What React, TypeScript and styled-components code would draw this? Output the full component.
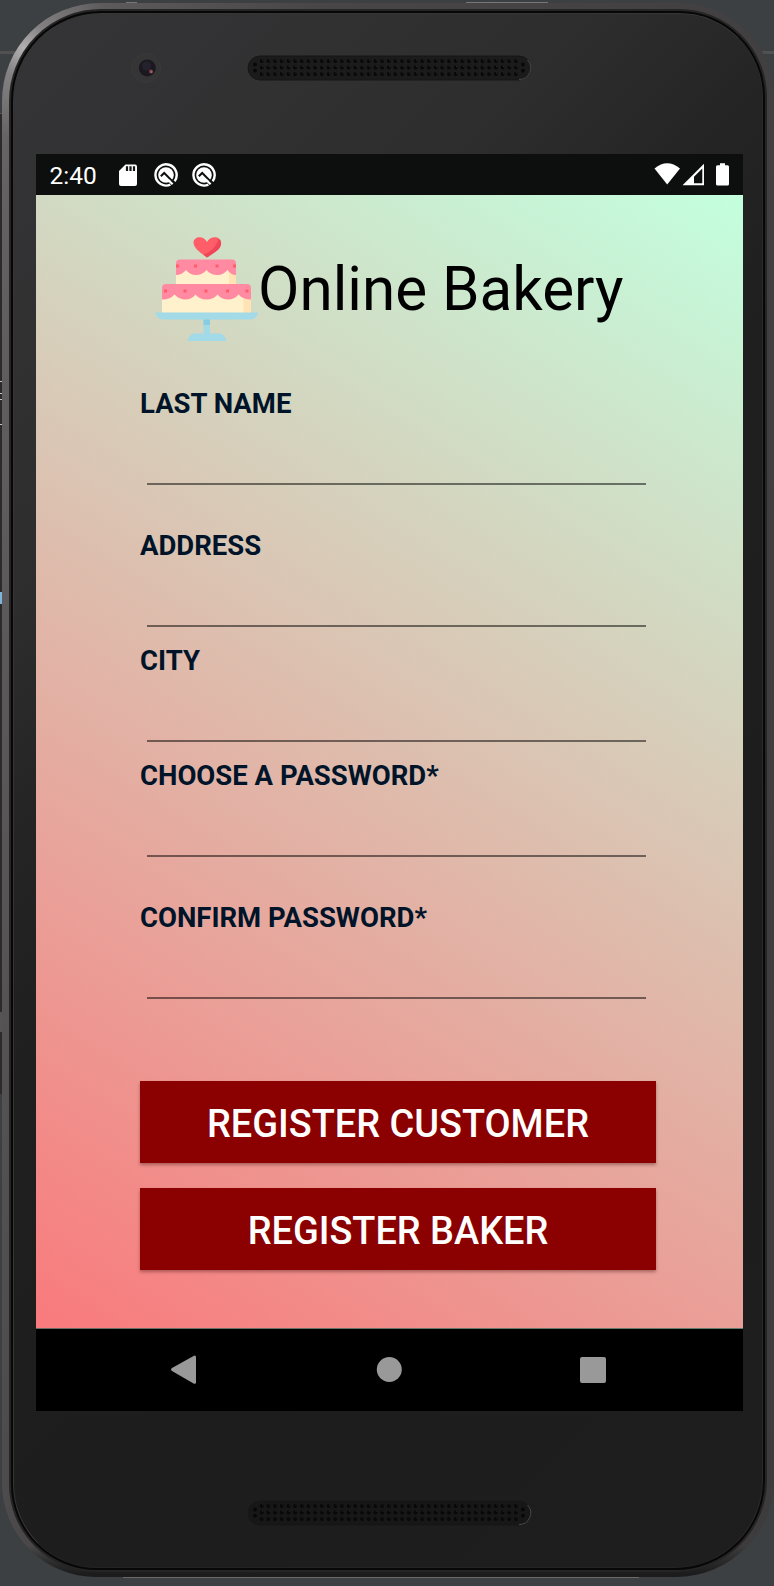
import React from "react";
import styled, { createGlobalStyle } from "styled-components";

const GlobalStyle = createGlobalStyle`
  * { box-sizing: border-box; }
  body { margin: 0; background: #3c3f41; font-family: Roboto, "Liberation Sans", sans-serif; }
  svg { display: block; flex: none; }
`;

const Desktop = styled.div`
  width: 774px;
  height: 1586px;
  overflow: hidden;
  display: flex;
  padding: 3px 0 9px 2px;
  background:
    linear-gradient(#777, #777) 126px 2px / 11px 1px no-repeat,
    linear-gradient(#777, #777) 466px 2px / 82px 1px no-repeat,
    linear-gradient(#6a6a6a, #6a6a6a) 123px 1577px / 516px 1px no-repeat,
    linear-gradient(#515151, #515151) 0 51px / 100% 3px no-repeat,
    linear-gradient(#c4c8cc, #c4c8cc) 0 381px / 2px 1px no-repeat,
    linear-gradient(#c4c8cc, #c4c8cc) 0 393px / 2px 1px no-repeat,
    linear-gradient(#c4c8cc, #c4c8cc) 0 399px / 2px 1px no-repeat,
    linear-gradient(#c4c8cc, #c4c8cc) 0 424px / 2px 1px no-repeat,
    linear-gradient(#7fb5dc, #7fb5dc) 0 592px / 2px 12px no-repeat,
    linear-gradient(#555, #555) 0 1012px / 2px 20px no-repeat,
    linear-gradient(#555, #555) 0 113px / 4px 1px no-repeat,
    linear-gradient(#2b2b2b, #2b2b2b) 0 114px / 4px 980px no-repeat,
    #3c4043;
`;

const Shell = styled.div`
  width: 772px;
  height: 1574px;
  flex: none;
  border-radius: 98px 94px 98px 94px;
  padding: 6px 7px 5px 7px;
  background:
    radial-gradient(circle at 22px 46px, #b3b1b2 0, rgba(150, 148, 149, 0.6) 28px, transparent 90px),
    linear-gradient(180deg, transparent 98%, #1c1c1c 99.8%),
    linear-gradient(100deg, #6b696a 0%, #626061 4%, #484647 30%, #3d3b3c 100%);
`;

const Rim = styled.div`
  height: 100%;
  border-radius: 92px 88px 92px 88px;
  padding: 2px;
  background: #070707;
  border: 2px solid #262526;
`;

const Face = styled.div`
  height: 100%;
  border-radius: 88px 84px 88px 84px;
  border: 1px solid #363637;
  border-right-color: #2a2a2a;
  border-bottom-color: #242424;
  padding: 1px 0 0 22px;
  background: linear-gradient(135deg, #353537 0%, #303031 17%, #2d2d2e 26%, #242424 36%, #1f1f1f 46%, #1d1d1d 70%, #1e1e1e 100%);
  display: flex;
  flex-direction: column;
`;

const Bezel = styled.div<{ $height: number; $top: number }>`
  height: ${(p) => p.$height}px;
  padding-top: ${(p) => p.$top}px;
  display: flex;
  align-items: flex-start;
  flex: none;
`;

const Screen = styled.main`
  width: 707px;
  height: 1257px;
  flex: none;
  display: flex;
  flex-direction: column;
`;

const StatusBar = styled.header`
  height: 41px;
  flex: none;
  background: #0d0f0e;
  color: #fff;
  display: flex;
  align-items: center;
  padding-left: 13.5px;
  font-size: 24.5px;
`;

const Clock = styled.span`
  width: 69.5px;
  padding-top: 2px;
`;

const StatusIcons = styled.div`
  display: flex;
  gap: 14px;
  align-items: center;
`;

const SignalIcons = styled.div`
  margin-left: auto;
  padding: 0 12px 2px 0;
`;

const Content = styled.section`
  height: 1134px;
  flex: none;
  padding: 41px 87px 0 104px;
  background: linear-gradient(32deg, #f97a7c, #c3ffde);
  border-bottom: 1px solid rgba(0, 0, 0, 0.5);
`;

const Heading = styled.div`
  display: flex;
  height: 110px;
  padding-left: 14.5px;
`;

const Title = styled.h1`
  margin: 16px 0 0 -0.5px;
  font-size: 60.2px;
  line-height: 76px;
  font-weight: 400;
  white-space: nowrap;
  color: #000;
`;

const Fields = styled.form`
  padding-top: 41px;
`;

const Field = styled.label<{ $height: number }>`
  display: block;
  height: ${(p) => p.$height}px;
  padding-top: 1px;
  color: #001429;
  font-size: 27.5px;
  line-height: 32px;
  font-weight: 700;
`;

const Underline = styled.span`
  display: block;
  width: 499px;
  height: 2px;
  margin: 63px 0 0 7px;
  background: rgba(0, 0, 0, 0.5);
`;

const Button = styled.button`
  display: block;
  width: 516px;
  height: 82px;
  margin: 0 0 25px;
  padding: 4px 0 0;
  border: 0;
  background: #8b0000;
  color: #fff;
  font: 500 37.9px/44px Roboto, sans-serif;
  box-shadow: 0 2px 3px rgba(70, 20, 20, 0.4);
`;

const NavBar = styled.nav`
  height: 82px;
  flex: none;
  background: #000;
  display: flex;
`;

const SpeakerIcon = ({ dim }: { dim?: boolean }) => (
  <svg width="285" height="26" viewBox="0 0 285 26">
    <rect x="1" y="1" width="283" height="24" rx="12" fill={dim ? "#171717" : "#1b1b1b"} stroke="#171717" />
    <path d="M272 24.500a11.500 11.500 0 0 0 8.500-19.500" fill="none" stroke="#4a4a4a" strokeWidth="1" />
    {[6, 12.5, 19].map((y) =>
      Array.from({ length: 39 }, (_, i) => (
        <g key={`${y}-${i}`}>
          <circle cx={14.7 + i * 6.69} cy={y} r="1.900" fill="#080808" />
          <circle cx={15.5 + i * 6.69} cy={y - 1} r=".6" fill={dim ? "#242424" : "#383838"} />
        </g>
      )),
    )}
    {[9.5, 15.7].map((y) => (
      <g key={y} fill="#080808">
        <circle cx="8" cy={y} r="1.900" />
        <circle cx="276" cy={y} r="1.900" />
      </g>
    ))}
  </svg>
);

const CameraIcon = () => (
  <svg width="32" height="32" viewBox="0 0 32 32">
    <circle cx="16" cy="16" r="14.500" fill="#353536" stroke="#39393b" />
    <circle cx="17.300" cy="16" r="8.500" fill="#1b191f" />
    <circle cx="16.500" cy="14" r="4.500" fill="#25222d" />
    <circle cx="21" cy="19.500" r="2" fill="#7d444c" />
    <circle cx="21.500" cy="20" r=".8" fill="#c0777b" />
  </svg>
);

const AppBadgeIcon = () => (
  <svg width="24" height="24" viewBox="0 0 24 24">
    <path d="M16.400 21.600A10.600 10.600 0 1 1 20.600 18.200" fill="none" stroke="#fff" strokeWidth="2.400" />
    <circle cx="12" cy="12" r="7.800" fill="#fff" />
    <path d="M6.800 13.200L10.200 10 18.800 18.600" fill="none" stroke="#0d0f0e" strokeWidth="2" />
    <path d="M14.500 17.200L18.600 21.300" stroke="#fff" strokeWidth="2.200" />
  </svg>
);

const SdIcon = () => (
  <svg width="21" height="24" viewBox="0 0 21 24">
    <path d="M6.500 1.500H16a2 2 0 0 1 2 2V21a2 2 0 0 1-2 2H2a2 2 0 0 1-2-2V8z" fill="#fff" />
    <path d="M8 3.200v4.800M11.500 3.200v4.800M15 3.200v4.800" stroke="#151515" strokeWidth="2.200" />
  </svg>
);

const CakeIcon = () => (
  <svg width="104" height="106" viewBox="0 0 104 106">
    <path d="M52 21.500C45 16.500 38.500 12 38.500 6.500 38.500 0 49-1 52 6 55-1 66 0 66 6.500 66 12 59 17 52 21.500z" fill="#ff5d68" />
    <path d="M63.500 2.500C68 6 66.500 12 61 15.500L52 21.500 48.500 18.500C56 16 62 10 63.500 2.500z" fill="#f04556" />
    <path d="M21 30h60v20H21z" fill="#fff1cb" />
    <path d="M74 30h7v20h-7z" fill="#ffe3b4" />
    <path d="M25 23.500h52q4 0 4 4V39q-5 0-8.500-5-4 5-10 5-7 0-11-5-4 5-10.500 5-6 0-10-5-4 5-10 5V27.500q0-4 4-4z" fill="#ff8aa2" />
    <path d="M7 58h89v20H7z" fill="#fff1cb" />
    <path d="M88.500 58H96v20h-7.500z" fill="#ffe3b4" />
    <path d="M11 48h81q4 0 4 4v11.500q-8 0-12.500-5-4 5-10.500 5t-10.500-5q-4 5-11 5t-11-5q-4 5-10 5t-11-5q-4 5-12.500 5V52q0-4 4-4z" fill="#ff8aa2" />
    <path d="M21 28.500h3v3h-3zM39 28.500h3v3h-3zM60.500 28.500h3v3h-3zM78 28.500h3v3h-3zM9 53.500h3v3H9zM28.500 53.500h3v3h-3zM49.500 53.500h3v3h-3zM71 53.500h3v3h-3zM90.500 53.500h3v3h-3z" fill="#ff5d68" />
    <path d="M0 76.500h103.500q-2.500 7-8 7H8q-5.500 0-8-7z" fill="#a2dae8" />
    <path d="M48.500 83.500h6.500v14h9.500q5 0 7 7.500h-39q2-7.500 7-7.500h9z" fill="#a2dae8" />
    <path d="M48.500 83.500H55V89h-6.500z" fill="#88cce3" />
  </svg>
);

const fields = [
  { name: "LAST NAME", height: 142 },
  { name: "ADDRESS", height: 115 },
  { name: "CITY", height: 115 },
  { name: "CHOOSE A PASSWORD*", height: 142 },
  { name: "CONFIRM PASSWORD*", height: 180 },
];

export default function App() {
  return (
    <>
      <GlobalStyle />
      <Desktop>
        <Shell>
          <Rim>
            <Face>
              <Bezel $height={139} $top={0}>
                <svg width="707" height="139" viewBox="0 0 707 139">
                  <g transform="translate(94 37)"><CameraIcon /></g>
                  <g transform="translate(211 40)"><SpeakerIcon /></g>
                </svg>
              </Bezel>
              <Screen>
                <StatusBar>
                  <Clock>2:40</Clock>
                  <StatusIcons>
                    <SdIcon />
                    <AppBadgeIcon />
                    <AppBadgeIcon />
                  </StatusIcons>
                  <SignalIcons>
                    <svg width="77" height="24" viewBox="0 0 77 24" fill="#fff">
                      <path d="M.5 6.500Q13.200-4 26 6.500L13.200 22.500z" />
                      <path d="M28.500 23.300L50 1.800v21.500zM48.300 6.500L40 14.800v6.500h8.300z" fillRule="evenodd" />
                      <path d="M66 1.300h5v2h2.500q1.500 0 1.500 1.500V22q0 1.500-1.500 1.500h-10Q62 23.500 62 22V4.800q0-1.500 1.500-1.500H66z" />
                    </svg>
                  </SignalIcons>
                </StatusBar>
                <Content>
                  <Heading>
                    <CakeIcon />
                    <Title>Online Bakery</Title>
                  </Heading>
                  <Fields>
                    {fields.map((f) => (
                      <Field key={f.name} $height={f.height}>
                        {f.name}
                        <Underline />
                      </Field>
                    ))}
                    <Button type="button">REGISTER CUSTOMER</Button>
                    <Button type="button">REGISTER BAKER</Button>
                  </Fields>
                </Content>
                <NavBar>
                  <svg width="707" height="82" viewBox="0 0 707 82" fill="#999">
                    <path d="M136 39L158 26.700q2-.5 2 1.500v25q0 2-2 1.500L136 42q-2-1.500 0-3z" />
                    <circle cx="353.300" cy="40.500" r="12.500" />
                    <rect x="544" y="28" width="26" height="26" rx="2" />
                  </svg>
                </NavBar>
              </Screen>
              <Bezel $height={140} $top={89}>
                <svg width="707" height="30" viewBox="0 0 707 30">
                  <g transform="translate(211 0)"><SpeakerIcon dim /></g>
                </svg>
              </Bezel>
            </Face>
          </Rim>
        </Shell>
      </Desktop>
    </>
  );
}
